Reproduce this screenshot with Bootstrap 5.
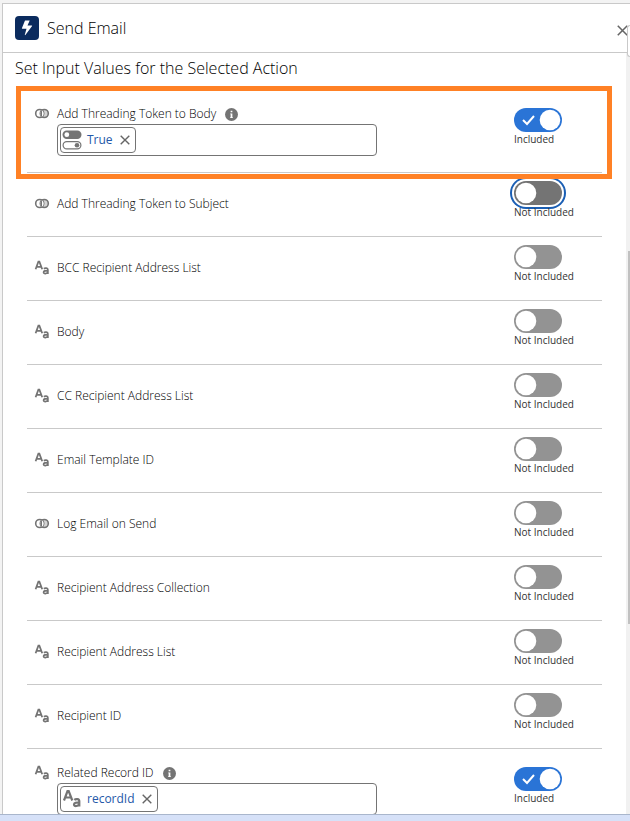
<!DOCTYPE html>
<html lang="en">
<head>
<meta charset="utf-8">
<meta name="viewport" content="width=device-width, initial-scale=1">
<title>Send Email</title>
<link href="https://cdn.jsdelivr.net/npm/bootstrap@5.3.0/dist/css/bootstrap.min.css" rel="stylesheet">
<style>
  :root { --line: #c9c9c9; --ink: #747474; --on: #2a74d6; }
  body { font-family: "Open Sans", "Noto Sans", sans-serif; font-size: 12px; line-height: 16px; color: #333; background: #f3f3f3; }
  .panel { margin: 3px 0 0 2px; border-top: 1px solid var(--line); border-left: 1px solid var(--line); background: #fff; }
  .panel-head { height: 49px; border-bottom: 1px solid var(--line); padding: 0 2px 0 12px; }
  .panel-name, .section-name { font-size: 16px; line-height: 24px; font-weight: 300; color: #000; }
  .section-name { padding: 3px 12px 10px; }
  .close-btn { width: 11px; height: 11px; margin-top: 4px; }
  .side-tab { right: 0; top: 25px; width: 3px; height: 32px; border: 1px solid var(--line); border-right: 0; border-radius: 4px 0 0 4px; background: #fff; z-index: 3; }
  .fields { padding: 0 24px; }
  .field { height: 64px; padding: 8px 40px 0 7px; border-bottom: 1px solid var(--line); }
  .field.filled { height: 83px; padding-top: 18px; }
  .field.filled .field-main { padding-top: 0; margin-top: -2px; }
  .field-main { padding-top: 15px; }
  .field-main label { font-weight: 300; color: #000; }
  .kind { width: 16px; height: 16px; margin-right: 7px; color: var(--ink); }
  .info { width: 13px; height: 13px; margin-left: 9px; }
  .toggle-col { width: 48px; }
  .toggle-col .form-check-input { width: 48px; height: 24px; margin: 0; border: 0; border-radius: 12px; background-color: #939393; background-position: center; background-size: 48px 24px;
    background-image: url("data:image/svg+xml,%3Csvg xmlns='http://www.w3.org/2000/svg' viewBox='0 0 48 24'%3E%3Ccircle cx='12' cy='12' r='10.3' fill='white'/%3E%3C/svg%3E"); }
  .toggle-col .form-check-input:checked { background-color: var(--on); background-position: center;
    background-image: url("data:image/svg+xml,%3Csvg xmlns='http://www.w3.org/2000/svg' viewBox='0 0 48 24'%3E%3Ccircle cx='36' cy='12' r='10.3' fill='white'/%3E%3Cpath d='M9 12l4 4 7-8' fill='none' stroke='white' stroke-width='2'/%3E%3C/svg%3E"); }
  .toggle-col .form-check-input.focused { background-color: #747474; box-shadow: 0 0 0 2px #fff, 0 0 0 4px #1b5fb4; }
  .caption-text { font-size: 10px; line-height: 15px; }
  .value-box { width: 320px; height: 32px; margin-left: 23px; margin-top: 2px; padding: 2px; border: 1px solid var(--ink); border-radius: 4px; }
  .pill { height: 26px; padding: 0 5px 0 1px; border: 1px solid var(--ink); border-radius: 4px; color: #2458a8; }
  .pill-kind { width: 20px; height: 20px; margin-right: 5px; color: var(--ink); }
  .pill-x { width: 10px; height: 10px; margin-left: 7px; }
  .marked::after { content: ""; position: absolute; inset: -4px -10px -7px -11px; border: 5px solid #ff8125; z-index: 2; pointer-events: none; }
  .track { width: 4px; padding-left: 2px; background: #f1f1f1; }
  .thumb-gap { height: 26%; }
  .thumb { height: 49%; background: #c1c1c1; }
  .bottom-strip { height: 7px; border-top: 1px solid #a9b6cc; background: #d6e1f8; }
</style>
<script src="https://cdn.jsdelivr.net/npm/bootstrap@5.3.0/dist/js/bootstrap.bundle.min.js"></script>
</head>
<body>
<svg class="d-none" aria-hidden="true">
  <symbol id="i-bool" viewBox="0 0 16 16"><g fill="none" stroke="currentColor"><circle cx="5.700" cy="7.500" r="4" stroke-width="1.600"/><circle cx="10.300" cy="7.500" r="4" stroke-width="1.600"/></g><path d="M8 4.200a4 4 0 0 1 0 6.600 4 4 0 0 1 0-6.600z" fill="#fff"/><path d="M8 4.200a4 4 0 0 0 0 6.600z" fill="currentColor"/><path d="M10.300 3.500a4 4 0 0 1 0 8c-.9 0-1.300-.2-1.800-.6 1.900-1.900 1.900-4.900 0-6.800.5-.4.9-.6 1.800-.6z" fill="currentColor" opacity=".3"/></symbol>
  <symbol id="i-text" viewBox="0 0 20 20"><g fill="none" stroke="currentColor" stroke-width="2.200"><path d="M2 11.500 5.500 2h1.200l3.600 9.500M3 8.500h6.200M12.300 10.900c1.500-1.300 5-1.200 5 1.300v5.300M17.300 13.300c-3 0-5.300.3-5.300 2.100 0 2.500 4.200 1.900 5.300-.2"/></g></symbol>
  <symbol id="i-switches" viewBox="0 0 20 20"><rect x=".5" y=".5" width="19" height="8.500" rx="4.200" fill="currentColor"/><circle cx="4.800" cy="4.700" r="2.400" fill="#fff"/><rect x="1.100" y="11.600" width="17.800" height="7.300" rx="3.600" fill="none" stroke="currentColor" stroke-width="1.200"/><circle cx="15" cy="15.200" r="2.300" fill="currentColor"/></symbol>
  <symbol id="i-x" viewBox="0 0 10 10"><path d="M.7.7l8.600 8.600M9.300.7.7 9.300" stroke="#666" stroke-width="1.400" fill="none"/></symbol>
  <symbol id="i-info" viewBox="0 0 12 12"><circle cx="6" cy="6" r="6" fill="#747474"/><path d="M5.200 2.500h1.600V4H5.200zM4.800 5h2v3.500h.5v.8H4.700v-.8h.5V5.800h-.4z" fill="#fff"/></symbol>
</svg>
<div class="vh-100 d-flex flex-column overflow-hidden position-relative">
  <main class="panel flex-grow-1 d-flex flex-column overflow-hidden">
    <header class="panel-head d-flex align-items-center flex-shrink-0">
      <svg width="24" height="24" viewBox="0 0 24 24" class="me-2" aria-hidden="true"><rect width="24" height="24" rx="4" fill="#0b2b5e"/><path d="M10 4.500h4.700l-2.200 5h4.200c.5 0 .6.300.4.600l-6.700 9c-.3.300-.7.100-.6-.3l1.700-6H7.300c-.4 0-.5-.3-.4-.5z" fill="#fff"/></svg>
      <h1 class="panel-name m-0">Send Email</h1>
      <button type="button" class="close-btn btn p-0 border-0 ms-auto d-flex" aria-label="Close"><svg class="w-100 h-100"><use href="#i-x"/></svg></button>
    </header>
    <div class="flex-grow-1 d-flex overflow-hidden">
      <form class="flex-grow-1 overflow-hidden">
        <h2 class="section-name m-0">Set Input Values for the Selected Action</h2>
        <div class="fields">
          <div class="field filled marked position-relative d-flex justify-content-between">
            <div class="field-main">
              <div class="d-flex align-items-center"><svg class="kind"><use href="#i-bool"/></svg><label for="s1">Add Threading Token to Body</label><svg class="info"><use href="#i-info"/></svg></div>
              <div class="value-box d-flex"><span class="pill d-flex align-items-center flex-shrink-0"><svg class="pill-kind"><use href="#i-switches"/></svg>True<button type="button" class="pill-x btn p-0 border-0 d-flex" aria-label="Remove True"><svg class="w-100 h-100"><use href="#i-x"/></svg></button></span><input type="text" class="form-control border-0 p-0 shadow-none" aria-label="Add Threading Token to Body value"></div>
            </div>
            <div class="toggle-col"><input class="form-check-input d-block" type="checkbox" role="switch" id="s1" checked><div class="caption-text text-nowrap">Included</div></div>
          </div>
          <div class="field d-flex justify-content-between">
            <div class="field-main d-flex"><svg class="kind"><use href="#i-bool"/></svg><label for="s2">Add Threading Token to Subject</label></div>
            <div class="toggle-col"><input class="form-check-input focused d-block" type="checkbox" role="switch" id="s2"><div class="caption-text text-nowrap">Not Included</div></div>
          </div>
          <div class="field d-flex justify-content-between">
            <div class="field-main d-flex"><svg class="kind"><use href="#i-text"/></svg><label for="s3">BCC Recipient Address List</label></div>
            <div class="toggle-col"><input class="form-check-input d-block" type="checkbox" role="switch" id="s3"><div class="caption-text text-nowrap">Not Included</div></div>
          </div>
          <div class="field d-flex justify-content-between">
            <div class="field-main d-flex"><svg class="kind"><use href="#i-text"/></svg><label for="s4">Body</label></div>
            <div class="toggle-col"><input class="form-check-input d-block" type="checkbox" role="switch" id="s4"><div class="caption-text text-nowrap">Not Included</div></div>
          </div>
          <div class="field d-flex justify-content-between">
            <div class="field-main d-flex"><svg class="kind"><use href="#i-text"/></svg><label for="s5">CC Recipient Address List</label></div>
            <div class="toggle-col"><input class="form-check-input d-block" type="checkbox" role="switch" id="s5"><div class="caption-text text-nowrap">Not Included</div></div>
          </div>
          <div class="field d-flex justify-content-between">
            <div class="field-main d-flex"><svg class="kind"><use href="#i-text"/></svg><label for="s6">Email Template ID</label></div>
            <div class="toggle-col"><input class="form-check-input d-block" type="checkbox" role="switch" id="s6"><div class="caption-text text-nowrap">Not Included</div></div>
          </div>
          <div class="field d-flex justify-content-between">
            <div class="field-main d-flex"><svg class="kind"><use href="#i-bool"/></svg><label for="s7">Log Email on Send</label></div>
            <div class="toggle-col"><input class="form-check-input d-block" type="checkbox" role="switch" id="s7"><div class="caption-text text-nowrap">Not Included</div></div>
          </div>
          <div class="field d-flex justify-content-between">
            <div class="field-main d-flex"><svg class="kind"><use href="#i-text"/></svg><label for="s8">Recipient Address Collection</label></div>
            <div class="toggle-col"><input class="form-check-input d-block" type="checkbox" role="switch" id="s8"><div class="caption-text text-nowrap">Not Included</div></div>
          </div>
          <div class="field d-flex justify-content-between">
            <div class="field-main d-flex"><svg class="kind"><use href="#i-text"/></svg><label for="s9">Recipient Address List</label></div>
            <div class="toggle-col"><input class="form-check-input d-block" type="checkbox" role="switch" id="s9"><div class="caption-text text-nowrap">Not Included</div></div>
          </div>
          <div class="field d-flex justify-content-between">
            <div class="field-main d-flex"><svg class="kind"><use href="#i-text"/></svg><label for="s10">Recipient ID</label></div>
            <div class="toggle-col"><input class="form-check-input d-block" type="checkbox" role="switch" id="s10"><div class="caption-text text-nowrap">Not Included</div></div>
          </div>
          <div class="field filled d-flex justify-content-between">
            <div class="field-main">
              <div class="d-flex align-items-center"><svg class="kind"><use href="#i-text"/></svg><label for="s11">Related Record ID</label><svg class="info"><use href="#i-info"/></svg></div>
              <div class="value-box d-flex"><span class="pill d-flex align-items-center flex-shrink-0"><svg class="pill-kind"><use href="#i-text"/></svg>recordId<button type="button" class="pill-x btn p-0 border-0 d-flex" aria-label="Remove recordId"><svg class="w-100 h-100"><use href="#i-x"/></svg></button></span><input type="text" class="form-control border-0 p-0 shadow-none" aria-label="Related Record ID value"></div>
            </div>
            <div class="toggle-col"><input class="form-check-input d-block" type="checkbox" role="switch" id="s11" checked><div class="caption-text text-nowrap">Included</div></div>
          </div>
        </div>
      </form>
      <div class="track flex-shrink-0" aria-hidden="true"><div class="thumb-gap"></div><div class="thumb"></div></div>
    </div>
  </main>
  <div class="side-tab position-absolute" aria-hidden="true"></div>
  <div class="bottom-strip flex-shrink-0"></div>
</div>
</body>
</html>
